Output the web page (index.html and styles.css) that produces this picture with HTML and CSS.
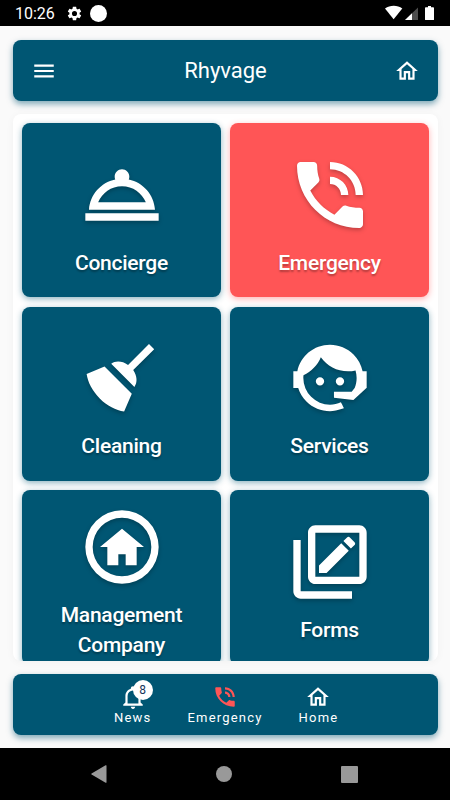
FILE: index.html
```html
<!DOCTYPE html>
<html lang="en">
<head>
<meta charset="utf-8">
<title>Rhyvage</title>
<link rel="stylesheet" href="styles.css">
</head>
<body>
<div class="screen">
  <div class="status">
    <span class="time">10:26</span>
    <svg class="gear" viewBox="0 0 24 24"><path fill-rule="evenodd" d="M19.140 12.940c.04-.3.06-.61.06-.94 0-.32-.02-.64-.07-.94l2.030-1.580c.18-.14.23-.41.12-.61l-1.920-3.320c-.12-.22-.37-.29-.59-.22l-2.390.96c-.5-.38-1.030-.7-1.620-.94l-.36-2.540c-.04-.24-.24-.41-.48-.41h-3.840c-.24 0-.43.17-.47.41l-.36 2.540c-.59.24-1.130.57-1.620.94l-2.390-.96c-.22-.08-.47 0-.59.22L2.740 8.870c-.12.21-.08.47.12.61l2.030 1.580c-.05.3-.09.63-.09.94s.02.64.07.94l-2.030 1.580c-.18.14-.23.41-.12.61l1.920 3.320c.12.22.37.29.59.22l2.390-.96c.5.38 1.030.7 1.620.94l.36 2.540c.05.24.24.41.48.41h3.840c.24 0 .44-.17.47-.41l.36-2.540c.59-.24 1.130-.56 1.620-.94l2.390.96c.22.08.47 0 .59-.22l1.920-3.320c.12-.22.07-.47-.12-.61l-2.010-1.580zM12 15.600A3.600 3.600 0 1 1 12 8.400a3.600 3.600 0 0 1 0 7.200z"/></svg>
    <span class="dot"></span>
    <svg class="signals" viewBox="0 0 51 16"><path d="M0 3.500C5-.2 12.500-.2 17.300 3.500L8.600 14.300z"/><path d="M33 2.500V15H20z" opacity=".3"/><path d="M27 8.300V15H20z"/><path d="M43 1h3v1.200h2.200a.8.8 0 0 1 .8.800v11.400a.6.6 0 0 1-.6.600H40.600a.6.6 0 0 1-.6-.6V3a.8.8 0 0 1 .8-.8H43z"/></svg>
  </div>

  <header class="bar">
    <svg class="icon" viewBox="0 0 24 24"><path d="M3 6h18v2H3zM3 11h18v2H3zM3 16h18v2H3z"/></svg>
    <h1 class="title">Rhyvage</h1>
    <svg class="icon" viewBox="0 0 24 24"><path d="M12 5.690L17 10.190V18H15V12H9V18H7V10.190L12 5.690M12 3L2 12H5V20H11V14H13V20H19V12H22"/></svg>
  </header>

  <main class="panel">
    <div class="card">
      <svg viewBox="0 0 24 24"><path fill-rule="evenodd" d="M2 17h20v2H2zM13.840 7.790c.1-.24.16-.51.16-.79 0-1.100-.9-2-2-2s-2 .9-2 2c0 .28.060.55.160.79C6.250 8.600 3.270 11.930 3 16h18c-.27-4.070-3.250-7.400-7.160-8.210zM12 9.580c2.950 0 5.470 1.830 6.500 4.410h-13c1.030-2.580 3.550-4.410 6.500-4.410z"/></svg>
      <span class="label">Concierge</span>
    </div>
    <div class="card alert">
      <svg viewBox="0 0 24 24"><path d="M20 15.500c-1.250 0-2.450-.2-3.570-.57-.35-.11-.74-.03-1.020.24l-2.200 2.200c-2.830-1.440-5.150-3.750-6.590-6.590l2.200-2.210c.28-.26.36-.65.25-1C8.700 6.450 8.500 5.250 8.500 4c0-.55-.45-1-1-1H4c-.55 0-1 .45-1 1 0 9.390 7.610 17 17 17 .55 0 1-.45 1-1v-3.500c0-.55-.45-1-1-1zM19 12h2c0-4.970-4.030-9-9-9v2c3.870 0 7 3.130 7 7zM15 12h2c0-2.760-2.240-5-5-5v2c1.660 0 3 1.340 3 3z"/></svg>
      <span class="label">Emergency</span>
    </div>
    <div class="card">
      <svg viewBox="0 0 24 24"><path d="M19.360 2.720L20.780 4.140L15.060 9.850C16.130 11.390 16.280 13.240 15.380 14.440L9.060 8.120C10.260 7.220 12.110 7.370 13.650 8.440L19.360 2.720M5.930 17.570C3.920 15.560 2.690 13.160 2.350 10.920L7.230 8.830L14.670 16.270L12.580 21.150C10.340 20.810 7.940 19.580 5.930 17.570Z"/></svg>
      <span class="label">Cleaning</span>
    </div>
    <div class="card">
      <svg viewBox="0 0 24 24"><path d="M18.720 14.760C19.070 13.910 19.260 13 19.260 12C19.260 11.280 19.150 10.590 18.960 9.950C18.310 10.100 17.630 10.180 16.920 10.180C13.860 10.180 11.150 8.670 9.500 6.340C8.610 8.500 6.910 10.260 4.770 11.220C4.730 11.470 4.730 11.740 4.730 12A7.270 7.270 0 0 0 12 19.270C13.050 19.270 14.060 19.040 14.970 18.630C15.540 19.720 15.800 20.260 15.780 20.260C14.140 20.810 12.870 21.080 12 21.080C9.580 21.080 7.270 20.130 5.570 18.420C4.530 17.380 3.760 16.110 3.330 14.730H2V10.180H3.090C3.930 6.040 7.600 2.920 12 2.920C14.400 2.920 16.710 3.870 18.420 5.580C19.690 6.840 20.540 8.450 20.890 10.180H22V14.730H21.940L18.380 18L13.080 17.400V15.730H17.910L18.720 14.760M9.270 11.770A1.140 1.140 0 1 1 9.270 14.050A1.140 1.140 0 1 1 9.270 11.770M14.720 11.770A1.140 1.140 0 1 1 14.720 14.050A1.140 1.140 0 1 1 14.720 11.770Z"/></svg>
      <span class="label">Services</span>
    </div>
    <div class="card">
      <svg viewBox="0 0 24 24"><path fill-rule="evenodd" d="M12 2a10 10 0 1 0 0 20a10 10 0 1 0 0-20zM12 4a8 8 0 1 1 0 16a8 8 0 1 1 0-16z"/><path d="M11 14H13V17H16V12H18L12 7L6 12H8V17H11z"/></svg>
      <span class="label">Management Company</span>
    </div>
    <div class="card">
      <svg viewBox="0 0 24 24"><path fill-rule="evenodd" d="M18.700 7.350L17.700 8.350L15.650 6.300L16.650 5.300C16.860 5.080 17.210 5.080 17.420 5.300L18.700 6.580C18.920 6.790 18.920 7.140 18.700 7.350M9 12.940L15.060 6.880L17.120 8.940L11.060 15H9V12.940M20 4V16H8V4H20M20 2H8C6.900 2 6 2.900 6 4V16C6 17.100 6.900 18 8 18H20C21.100 18 22 17.100 22 16V4C22 2.900 21.100 2 20 2M4 6H2V20C2 21.100 2.900 22 4 22H18V20H4V6Z"/></svg>
      <span class="label">Forms</span>
    </div>
  </main>

  <nav class="bar tabs">
    <div class="tab">
      <span class="badged">
        <svg class="icon" viewBox="0 0 24 24"><path d="M10 21H14C14 22.100 13.100 23 12 23S10 22.100 10 21M21 19V20H3V19L5 17V11C5 7.900 7.030 5.170 10 4.290V4A2 2 0 0 1 14 4V4.290C16.970 5.170 19 7.900 19 11V17L21 19M17 11A5 5 0 0 0 7 11V18H17V11Z"/></svg>
        <span class="badge">8</span>
      </span>
      <span class="tab-label">News</span>
    </div>
    <div class="tab">
      <svg class="icon red" viewBox="0 0 24 24"><path d="M20 15.500c-1.250 0-2.450-.2-3.570-.57-.35-.11-.74-.03-1.020.24l-2.200 2.200c-2.830-1.440-5.150-3.750-6.590-6.590l2.200-2.210c.28-.26.36-.65.25-1C8.700 6.450 8.500 5.250 8.500 4c0-.55-.45-1-1-1H4c-.55 0-1 .45-1 1 0 9.390 7.610 17 17 17 .55 0 1-.45 1-1v-3.500c0-.55-.45-1-1-1zM19 12h2c0-4.970-4.030-9-9-9v2c3.870 0 7 3.130 7 7zM15 12h2c0-2.760-2.240-5-5-5v2c1.660 0 3 1.340 3 3z"/></svg>
      <span class="tab-label">Emergency</span>
    </div>
    <div class="tab">
      <svg class="icon" viewBox="0 0 24 24"><path d="M12 5.690L17 10.190V18H15V12H9V18H7V10.190L12 5.690M12 3L2 12H5V20H11V14H13V20H19V12H22"/></svg>
      <span class="tab-label">Home</span>
    </div>
  </nav>

  <div class="system">
    <svg viewBox="0 0 16 18"><path d="M15.500.8v16.400a.6.6 0 0 1-.9.500L.6 9.500a.6.6 0 0 1 0-1L14.600.3a.6.6 0 0 1 .9.500z"/></svg>
    <span class="sys-home"></span>
    <span class="sys-recent"></span>
  </div>
</div>
</body>
</html>
```
FILE: styles.css
```css
* { box-sizing: border-box; }
body { margin: 0; font-family: Roboto, "Liberation Sans", sans-serif; color: #fff; }
svg { display: block; fill: currentColor; flex: none; }

.screen {
  width: 450px;
  height: 800px;
  background: #fafafa;
  display: flex;
  flex-direction: column;
  overflow: hidden;
}

.status {
  height: 26px;
  flex: none;
  background: #000;
  display: flex;
  align-items: center;
  padding: 1px 15px 0 15px;
}
.time { width: 51px; font-size: 16px; line-height: 26px; padding-top: 1px; }
.gear { width: 17px; height: 17px; margin-top: -1px; }
.dot { width: 17px; height: 17px; margin-left: 7px; margin-top: -1px; border-radius: 50%; background: #fff; }
.signals { width: 51px; height: 16px; margin-left: auto; margin-right: -1px; margin-top: -1px; }

.bar {
  flex: none;
  height: 61px;
  margin: 13.600px 12px 0 13.400px;
  padding: 1px 18px 0 17.600px;
  border-radius: 8px;
  background: #005673;
  box-shadow: 0 3px 6px rgba(0, 86, 115, .5);
  display: flex;
  align-items: center;
  justify-content: space-between;
}
.icon { width: 26px; height: 26px; }
.title { margin: 0; font-size: 22px; font-weight: 400; line-height: 30px; }

.panel {
  flex: none;
  height: 547px;
  margin: 13.400px 12px 0 13px;
  padding: 9px;
  border-radius: 8px;
  background: #fff;
  box-shadow: 0 1px 8px rgba(0, 0, 0, .04);
  overflow: hidden;
  display: grid;
  grid-template-columns: 1fr 1fr;
  grid-auto-rows: 174.500px;
  gap: 9.200px 9px;
}
.card {
  border-radius: 8px;
  background: #005673;
  box-shadow: 0 2px 6px rgba(0, 86, 115, .45);
  display: flex;
  flex-direction: column;
  align-items: center;
  justify-content: center;
  gap: 9px;
  padding: 8px 30px 0;
}
.card svg { width: 88px; height: 88px; filter: drop-shadow(0 2px 2px rgba(0, 0, 0, .25)); }
.alert { background: #ff5556; box-shadow: 0 2px 6px rgba(255, 85, 86, .45); }
.label {
  font-size: 21px;
  font-weight: 500;
  line-height: 30px;
  letter-spacing: -.25px;
  text-align: center;
  text-shadow: 0 2px 2px rgba(0, 0, 0, .3);
}

.tabs { margin-top: 13.400px; justify-content: center; gap: 36px; padding: 0 0 0 1px; }
.tab { display: flex; flex-direction: column; align-items: center; }
.tab-label { font-size: 13px; line-height: 16px; letter-spacing: 1.200px; }
.badged { position: relative; }
.badge {
  position: absolute;
  left: 13px;
  top: -4px;
  width: 20px;
  height: 20px;
  border-radius: 50%;
  background: #fff;
  color: #17365c;
  font-size: 12px;
  line-height: 20px;
  text-align: center;
}
.red { color: #ff5556; }

.system {
  height: 52px;
  flex: none;
  margin-top: auto;
  background: #000;
  color: #999;
  display: flex;
  align-items: center;
  justify-content: space-between;
  padding: 0 92px 0 91px;
}
.system svg { width: 16px; height: 18px; }
.sys-home { width: 16px; height: 16px; border-radius: 50%; background: #999; }
.sys-recent { width: 17px; height: 17px; border-radius: 1px; background: #999; }
```
